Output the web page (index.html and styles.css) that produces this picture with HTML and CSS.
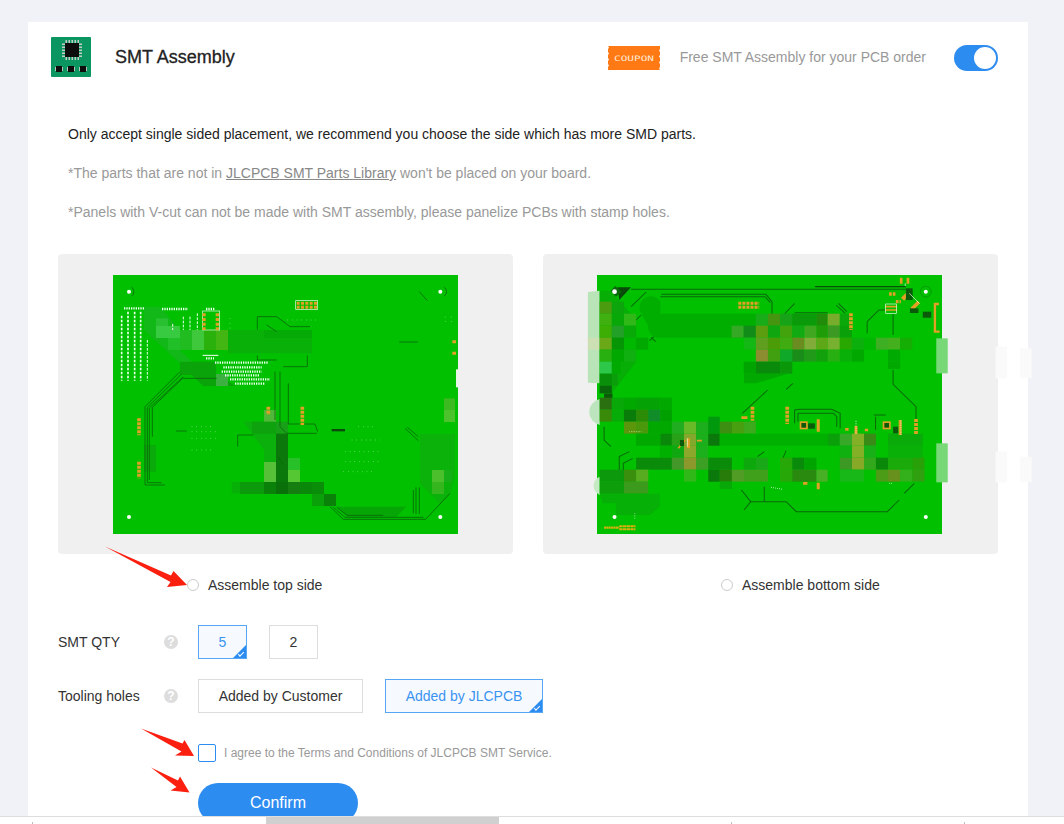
FILE: index.html
```html
<!DOCTYPE html>
<html>
<head>
    <title>SMT Assembly</title>
    <link rel="stylesheet" href="styles.css">
</head>
<body>
<div class="page">
    <div class="content">
        <div class="card">
            <div class="head">
                <svg class="logo" viewBox="0 0 40 40">
                    <rect width="40" height="40" rx="1" fill="#0b9560"/>
                    <g fill="none" stroke="#c4ccc6" stroke-width="3" stroke-dasharray="1.500 1.500">
                        <path d="M14.500 4.500H28"/>
                        <path d="M14.500 21.500H28"/>
                        <path d="M12.500 6.500V20"/>
                        <path d="M29.500 6.500V20"/>
                    </g>
                    <g fill="#b4c4ba">
                        <rect x="4" y="30" width="1" height="4"/>
                        <rect x="11" y="30" width="1" height="4"/>
                        <rect x="16" y="30" width="1" height="4"/>
                        <rect x="23" y="30" width="1" height="4"/>
                        <rect x="28" y="30" width="1" height="4"/>
                        <rect x="35" y="30" width="1" height="4"/>
                    </g>
                    <g fill="#0d0d0d">
                        <rect x="14" y="6" width="14" height="14"/>
                        <rect x="5" y="29" width="6" height="6"/>
                        <rect x="17" y="29" width="6" height="6"/>
                        <rect x="29" y="29" width="6" height="6"/>
                    </g>
                </svg>
                <h1 class="title">SMT Assembly</h1>
                <svg class="coupon" viewBox="0 0 52 24">
                    <path fill="#ff7a14" d="M0 0H52V3L51 4.500 52 6V9L51 10.500 52 12V15L51 16.500 52 18V21L51 22.500 52 24H0V21L1 19.500 0 18V15L1 13.500 0 12V9L1 7.500 0 6V3L1 1.500Z"/>
                    <text x="6" y="15" class="coupon-text" textLength="40" lengthAdjust="spacingAndGlyphs">COUPON</text>
                </svg>
                <span class="free">Free SMT Assembly for your PCB order</span>
                <span class="toggle"><span class="knob"></span></span>
            </div>

            <div class="notes">
                <p class="note-dark">Only accept single sided placement, we recommend you choose the side which has more SMD parts.</p>
                <p>*The parts that are not in <a href="#">JLCPCB SMT Parts Library</a> won't be placed on your board.</p>
                <p>*Panels with V-cut can not be made with SMT assembly, please panelize PCBs with stamp holes.</p>
            </div>

            <div class="boards">
                <div class="board-box">
                    <svg class="pcb" viewBox="189 75 1035 777" preserveAspectRatio="none">
                        <rect x="189" y="75" width="1035" height="777" fill="#00c000"/>
                        <!-- blurred parts -->
                        <g>
                            <path fill="#12b818" d="M282 170H330L390 240V300L430 340H390L282 240Z"/>
                            <rect x="318" y="205" width="36" height="24" fill="#28c030"/>
                            <rect x="318" y="228" width="72" height="36" fill="#38ca40"/>
                            <rect x="354" y="264" width="36" height="36" fill="#22c028"/>
                            <rect x="390" y="240" width="36" height="60" fill="#20bc20"/>
                            <rect x="426" y="240" width="36" height="60" fill="#3fc83c"/>
                            <rect x="462" y="240" width="36" height="60" fill="#2ab10c"/>
                            <rect x="498" y="240" width="36" height="60" fill="#44b614"/>
                            <rect x="534" y="240" width="252" height="70" fill="#08b008"/>
                            <rect x="642" y="240" width="144" height="24" fill="#06aa06"/>
                            <path fill="#0aa40a" d="M390 335H498V370L555 408H460L425 375H390Z"/>
                            <rect x="498" y="372" width="36" height="36" fill="#3cb040"/>
                            <path fill="#0cb00c" d="M580 515H680L714 550V696H642V600Z"/>
                            <rect x="642" y="480" width="36" height="36" fill="#50b838"/>
                            <rect x="606" y="515" width="72" height="36" fill="#0ea20e"/>
                            <rect x="678" y="515" width="36" height="36" fill="#18a018"/>
                            <rect x="678" y="551" width="36" height="145" fill="#0a780a"/>
                            <rect x="714" y="624" width="36" height="36" fill="#28c028"/>
                            <rect x="714" y="660" width="36" height="36" fill="#55c733"/>
                            <rect x="642" y="636" width="36" height="60" fill="#55c038"/>
                            <rect x="545" y="696" width="25" height="34" fill="#06b006"/>
                            <rect x="570" y="696" width="72" height="36" fill="#0c9a0c"/>
                            <rect x="642" y="696" width="36" height="36" fill="#0a820a"/>
                            <rect x="678" y="696" width="36" height="36" fill="#0a700a"/>
                            <rect x="714" y="696" width="36" height="36" fill="#167e10"/>
                            <rect x="750" y="696" width="36" height="36" fill="#0a880a"/>
                            <rect x="786" y="696" width="36" height="36" fill="#0a8e0a"/>
                            <rect x="786" y="732" width="36" height="36" fill="#0aa00a"/>
                            <rect x="822" y="732" width="36" height="36" fill="#0a820a"/>
                            <path fill="#06a606" d="M860 770H1068L1040 800H890Z"/>
                            <rect x="1182" y="445" width="33" height="35" fill="#3dba20"/>
                            <rect x="1182" y="480" width="33" height="36" fill="#4cc22c"/>
                            <path fill="#0ab20a" d="M1110 552H1215V680L1200 730L1170 762L1110 700Z"/>
                            <rect x="1146" y="660" width="36" height="36" fill="#4cc02c"/>
                            <rect x="1146" y="696" width="36" height="36" fill="#36b61e"/>
                            <rect x="1182" y="660" width="22" height="36" fill="#18b018"/>
                            <rect x="282" y="585" width="36" height="80" fill="#0aaa0a"/>
                            <rect x="1218" y="358" width="8" height="54" fill="#e8f5e8"/>
                        </g>
                        <!-- tracks -->
                        <g fill="none" stroke="#0a680a" stroke-width="2.500">
                            <path d="M390 365L285 470V705H345"/>
                            <path d="M395 372L292 472V698H335"/>
                            <path d="M400 380L298 474V690"/>
                            <path d="M500 385H398L307 472V560"/>
                            <path d="M622 240V200H680L720 230H780"/>
                            <path d="M650 225L680 245"/>
                            <path d="M622 316V330H680"/>
                            <path d="M675 365V510"/>
                            <path d="M690 365V530L710 550H800"/>
                            <path d="M715 400V522H795L803 545"/>
                            <path d="M700 350H772V316"/>
                            <path d="M1048 276H1104"/>
                            <path d="M1108 125L1132 152"/>
                            <path d="M563 590V555H610"/>
                            <path d="M378 543H410"/>
                            <path d="M840 770L880 808H1127L1200 730"/>
                            <path d="M850 772L885 802H1120"/>
                            <path d="M860 772L892 796H1000"/>
                            <path d="M1065 535L1105 572"/>
                            <path d="M1072 532L1105 560"/>
                            <path d="M1090 720V790"/>
                            <path d="M1098 712V792M1108 712V792"/>
                            <path d="M684 620L700 645"/>
                        </g>
                        <rect x="845" y="537" width="40" height="7" fill="#0a4a0a"/>
                        <!-- silkscreen -->
                        <g fill="none" stroke="#e8ffe8" stroke-width="5" stroke-dasharray="8 4">
                            <path d="M215 197V392"/>
                            <path d="M234 185V392"/>
                            <path d="M254 185V392"/>
                            <path d="M272 185V392"/>
                            <path d="M292 270V392" stroke-width="3"/>
                            <path d="M368 222V240M400 200V240M420 200V240M442 190V240" stroke-width="3"/>
                        </g>
                        <g fill="none" stroke="#e8ffe8" stroke-width="7" stroke-dasharray="4 3">
                            <path d="M222 175H285"/>
                            <path d="M336 177H414"/>
                            <path d="M468 177H496"/>
                            <path d="M468 325H492"/>
                            <path d="M495 338H655"/>
                            <path d="M520 352H635"/>
                            <path d="M515 365H635"/>
                            <path d="M525 376H630"/>
                            <path d="M540 388H660"/>
                            <path d="M555 401H645"/>
                        </g>
                        <g fill="none" stroke="#b8f0b8" stroke-width="2" stroke-dasharray="2 12">
                            <path d="M425 530H490"/>
                            <path d="M425 545H500"/>
                            <path d="M425 565H500"/>
                            <path d="M425 600H490"/>
                            <path d="M925 530H975"/>
                            <path d="M905 570H990"/>
                            <path d="M885 605H985"/>
                            <path d="M885 635H995"/>
                            <path d="M880 665H970"/>
                            <path d="M1186 200V225M1204 200V225"/>
                            <path d="M540 205V240M712 210H800"/>
                        </g>
                        <rect x="458" y="183" width="51" height="57" fill="none" stroke="#e8ffe8" stroke-width="2"/>
                        <rect x="737" y="152" width="66" height="26" fill="none" stroke="#e8ffe8" stroke-width="2"/>
                        <path d="M458 316H505" stroke="#fff" stroke-width="3"/>
                        <!-- pads -->
                        <g fill="none" stroke="#e2a024">
                            <path d="M462 190V240M502 190V240" stroke-width="10" stroke-dasharray="9 5"/>
                            <path d="M740 160H803M740 172H803" stroke-width="9" stroke-dasharray="9 4"/>
                            <path d="M267 505V556M267 635V685M757 470V525M655 470V495" stroke-width="11" stroke-dasharray="9 3"/>
                            <path d="M1207 275H1218M1207 310H1218" stroke-width="9"/>
                        </g>
                        <!-- holes -->
                        <g fill="#fff">
                            <circle cx="237" cy="125" r="6"/>
                            <circle cx="1171" cy="125" r="6"/>
                            <circle cx="237" cy="801" r="6"/>
                            <circle cx="1171" cy="801" r="6"/>
                        </g>
                        <path d="M245 112A16 16 0 0 1 245 138M1183 112A16 16 0 0 1 1183 138" fill="none" stroke="#0a680a" stroke-width="2.500"/>
                    </svg>
                </div>
                <div class="board-box">
                    <svg class="pcb pcb-back" viewBox="184 75 1023 777" preserveAspectRatio="none">
                        <rect x="184" y="75" width="1023" height="777" fill="#00c000"/>
                        <!-- tracks under the blur -->
                        <path d="M245 112H285L250 150Z" fill="#0a4a0a"/>
                        <path d="M222 125L238 108L258 125L238 142Z" fill="#0a680a"/>
                        <g fill="none" stroke="#0a680a" stroke-width="3">
                            <path d="M285 118H1100"/>
                            <path d="M830 110H1100" stroke-width="4" stroke="#0a500a"/>
                            <path d="M375 133H685L703 155V192"/>
                            <path d="M372 140H682L698 158"/>
                            <path d="M330 126L285 170M300 210L315 195"/>
                            <path d="M770 160L740 192M770 188H868"/>
                            <path d="M893 165L920 190M900 160L925 185"/>
                            <path d="M985 215L1020 180H1040M985 215V250"/>
                            <path d="M1062 190V255"/>
                            <path d="M1062 360V403L1130 470V530"/>
                            <path d="M640 755H745L775 785H1045L1080 750"/>
                            <path d="M690 420L615 490"/>
                            <path d="M640 755L612 720M640 755L620 780"/>
                            <path d="M680 710V755"/>
                            <path d="M205 530V570L225 590"/>
                            <path d="M250 670V620L280 605"/>
                            <path d="M262 660V640L290 625"/>
                            <path d="M765 400L745 418M660 620L680 605M735 625L745 602"/>
                            <path d="M1125 700L1095 730"/>
                            <path d="M770 520V480L785 478H880L905 490V535"/>
                            <path d="M780 515V490H885L895 500V530"/>
                            <path d="M1005 495H1040M1010 540V500"/>
                            <path d="M262 360L290 330M268 365L292 340"/>
                            <path d="M345 262L358 275M340 272L355 258"/>
                        </g>
                        <rect x="205" y="430" width="25" height="15" fill="#0a5a0a"/>
                        <!-- blur mosaic -->
                        <path fill="#b8e4b8" d="M157 126L192 122V400L157 398Z"/>
                        <rect x="157" y="263" width="35" height="36" fill="#cce0b4"/>
                        <path fill="#bde5bd" d="M192 447A40 40 0 0 0 192 525Z"/>
                        <path fill="#c4eac4" d="M192 680A30 30 0 0 0 192 735Z"/>
                        <rect x="1190" y="265" width="34" height="105" fill="#78d878"/>
                        <rect x="1190" y="580" width="34" height="117" fill="#78d878"/>
                        <rect x="1366" y="290" width="34" height="95" fill="#fafafa"/>
                        <rect x="1438" y="295" width="35" height="90" fill="#fafafa"/>
                        <rect x="1366" y="605" width="34" height="92" fill="#fafafa"/>
                        <rect x="1438" y="620" width="35" height="77" fill="#fafafa"/>
                        <path fill="#06ae06" d="M192 122H225L300 210V335L228 430H192Z"/>
                        <g>
                            <rect x="192" y="155" width="36" height="36" fill="#4c9c10"/>
                            <rect x="228" y="155" width="36" height="36" fill="#0ca50c"/>
                            <rect x="192" y="191" width="36" height="36" fill="#3fb010"/>
                            <rect x="228" y="191" width="36" height="36" fill="#08a808"/>
                            <rect x="264" y="191" width="36" height="36" fill="#30b818"/>
                            <rect x="192" y="227" width="36" height="36" fill="#3cae04"/>
                            <rect x="228" y="227" width="36" height="36" fill="#22a028"/>
                            <rect x="264" y="227" width="36" height="36" fill="#08aa08"/>
                            <rect x="192" y="263" width="36" height="36" fill="#6ba818"/>
                            <rect x="228" y="263" width="36" height="36" fill="#059505"/>
                            <rect x="264" y="263" width="36" height="36" fill="#00b800"/>
                            <rect x="300" y="263" width="36" height="36" fill="#00a800"/>
                            <rect x="192" y="299" width="36" height="36" fill="#28b010"/>
                            <rect x="228" y="299" width="36" height="36" fill="#00a800"/>
                            <rect x="264" y="299" width="36" height="36" fill="#10b010"/>
                            <rect x="192" y="335" width="36" height="36" fill="#2dc84a"/>
                            <rect x="228" y="335" width="26" height="36" fill="#00aa00"/>
                            <rect x="192" y="371" width="36" height="36" fill="#0a8f0a"/>
                            <rect x="228" y="371" width="18" height="36" fill="#0a9f0a"/>
                            <rect x="192" y="407" width="36" height="23" fill="#0a660a"/>
                        </g>
                        <path fill="#00ae00" d="M315 190A30 30 0 0 1 372 155V191H655V263H360Q335 255 335 225Z"/>
                        <g>
                            <rect x="655" y="191" width="36" height="36" fill="#18ac18"/>
                            <rect x="691" y="191" width="36" height="36" fill="#459510"/>
                            <rect x="727" y="191" width="36" height="36" fill="#18a218"/>
                            <rect x="763" y="191" width="72" height="36" fill="#0a9a0a"/>
                            <rect x="835" y="191" width="33" height="36" fill="#228c0a"/>
                            <rect x="868" y="191" width="36" height="36" fill="#78ac2c"/>
                            <rect x="904" y="191" width="36" height="36" fill="#0aa80a"/>
                            <rect x="583" y="227" width="36" height="36" fill="#35a825"/>
                            <rect x="619" y="227" width="36" height="36" fill="#128c18"/>
                            <rect x="655" y="227" width="36" height="36" fill="#5c9e10"/>
                            <rect x="691" y="227" width="36" height="36" fill="#10a610"/>
                            <rect x="727" y="227" width="36" height="36" fill="#42a30c"/>
                            <rect x="763" y="227" width="36" height="36" fill="#12aa12"/>
                            <rect x="799" y="227" width="36" height="36" fill="#40a820"/>
                            <rect x="835" y="227" width="33" height="36" fill="#209c08"/>
                            <rect x="868" y="227" width="36" height="36" fill="#3c9a24"/>
                            <rect x="904" y="227" width="36" height="36" fill="#0aa00a"/>
                            <rect x="619" y="263" width="36" height="36" fill="#14b814"/>
                            <rect x="655" y="263" width="36" height="36" fill="#609e20"/>
                            <rect x="691" y="263" width="36" height="36" fill="#4c9c08"/>
                            <rect x="727" y="263" width="36" height="36" fill="#40ac12"/>
                            <rect x="763" y="263" width="36" height="36" fill="#6b8c20"/>
                            <rect x="799" y="263" width="36" height="36" fill="#82ac3a"/>
                            <rect x="835" y="263" width="33" height="36" fill="#5ea818"/>
                            <rect x="868" y="263" width="36" height="36" fill="#78b030"/>
                            <rect x="904" y="263" width="36" height="36" fill="#28a800"/>
                            <rect x="940" y="263" width="36" height="36" fill="#0cb00c"/>
                            <rect x="976" y="263" width="35" height="36" fill="#00b800"/>
                            <rect x="1011" y="263" width="36" height="36" fill="#3eae22"/>
                            <rect x="1047" y="263" width="36" height="36" fill="#44b01e"/>
                            <rect x="1083" y="263" width="36" height="36" fill="#14ae04"/>
                            <rect x="655" y="299" width="36" height="36" fill="#8c8c30"/>
                            <rect x="691" y="299" width="36" height="36" fill="#40a010"/>
                            <rect x="727" y="299" width="36" height="36" fill="#10a828"/>
                            <rect x="763" y="299" width="36" height="36" fill="#1a8c1a"/>
                            <rect x="799" y="299" width="36" height="36" fill="#209a18"/>
                            <rect x="835" y="299" width="33" height="36" fill="#12a00c"/>
                            <rect x="868" y="299" width="36" height="36" fill="#28b012"/>
                            <rect x="904" y="299" width="36" height="36" fill="#08b008"/>
                            <rect x="940" y="299" width="36" height="36" fill="#00a800"/>
                            <rect x="1047" y="299" width="36" height="36" fill="#00aa00"/>
                            <rect x="619" y="335" width="36" height="36" fill="#00a400"/>
                            <rect x="655" y="335" width="72" height="36" fill="#0a8a0a"/>
                            <rect x="727" y="335" width="36" height="36" fill="#0a980a"/>
                            <rect x="1047" y="335" width="36" height="22" fill="#00a800"/>
                            <path fill="#00a800" d="M620 371H750L655 400H620Z"/>
                        </g>
                        <g>
                            <rect x="192" y="443" width="36" height="36" fill="#2a6f10"/>
                            <rect x="228" y="443" width="36" height="36" fill="#08a808"/>
                            <rect x="264" y="443" width="36" height="36" fill="#00a800"/>
                            <rect x="300" y="443" width="70" height="36" fill="#04a204"/>
                            <rect x="370" y="443" width="36" height="36" fill="#00a800"/>
                            <rect x="192" y="479" width="36" height="36" fill="#3a8a0a"/>
                            <rect x="228" y="479" width="36" height="36" fill="#08ac08"/>
                            <rect x="264" y="479" width="36" height="36" fill="#0a7c0a"/>
                            <rect x="300" y="479" width="36" height="36" fill="#2c8c08"/>
                            <rect x="336" y="479" width="36" height="36" fill="#108c28"/>
                            <rect x="372" y="479" width="34" height="36" fill="#00a000"/>
                            <rect x="264" y="515" width="36" height="36" fill="#5c960c"/>
                            <rect x="300" y="515" width="36" height="36" fill="#4c980c"/>
                            <rect x="336" y="515" width="70" height="36" fill="#00a800"/>
                            <rect x="406" y="515" width="36" height="36" fill="#20ae20"/>
                            <rect x="442" y="515" width="36" height="36" fill="#68ba28"/>
                            <rect x="478" y="515" width="36" height="36" fill="#1cae1c"/>
                            <rect x="514" y="500" width="34" height="51" fill="#00980c"/>
                            <rect x="548" y="515" width="36" height="36" fill="#3c8f10"/>
                            <rect x="584" y="515" width="36" height="36" fill="#48a010"/>
                            <rect x="620" y="515" width="35" height="36" fill="#3caa1c"/>
                            <rect x="300" y="551" width="72" height="36" fill="#00a800"/>
                            <rect x="372" y="551" width="34" height="36" fill="#0a880a"/>
                            <rect x="406" y="551" width="36" height="36" fill="#28a018"/>
                            <rect x="442" y="551" width="36" height="36" fill="#84a82c"/>
                            <rect x="478" y="551" width="36" height="36" fill="#1cae1c"/>
                            <rect x="514" y="551" width="34" height="36" fill="#0a780a"/>
                            <rect x="548" y="551" width="320" height="36" fill="#00b000"/>
                            <rect x="868" y="551" width="36" height="36" fill="#0aa00a"/>
                            <rect x="904" y="551" width="36" height="36" fill="#38a828"/>
                            <rect x="940" y="551" width="36" height="36" fill="#84b028"/>
                            <rect x="976" y="551" width="35" height="36" fill="#3a8a18"/>
                            <rect x="1047" y="551" width="103" height="36" fill="#0aaa0a"/>
                            <rect x="370" y="587" width="36" height="36" fill="#00b000"/>
                            <rect x="406" y="587" width="36" height="36" fill="#10a810"/>
                            <rect x="442" y="587" width="36" height="36" fill="#8ca82c"/>
                            <rect x="478" y="587" width="36" height="36" fill="#1cb01c"/>
                            <rect x="904" y="587" width="36" height="36" fill="#10b010"/>
                            <rect x="940" y="587" width="36" height="36" fill="#84b028"/>
                            <rect x="976" y="587" width="35" height="36" fill="#18b018"/>
                            <rect x="1047" y="587" width="103" height="36" fill="#08b008"/>
                            <rect x="300" y="623" width="106" height="36" fill="#0a8c0a"/>
                            <rect x="406" y="623" width="36" height="36" fill="#44982a"/>
                            <rect x="442" y="623" width="36" height="36" fill="#8c982c"/>
                            <rect x="478" y="623" width="36" height="36" fill="#3ca024"/>
                            <rect x="514" y="623" width="70" height="36" fill="#0a8c0a"/>
                            <rect x="619" y="623" width="36" height="36" fill="#0ca80c"/>
                            <rect x="655" y="623" width="36" height="36" fill="#18a818"/>
                            <rect x="727" y="623" width="36" height="36" fill="#28a808"/>
                            <rect x="763" y="623" width="36" height="36" fill="#0a8a0a"/>
                            <rect x="799" y="623" width="36" height="36" fill="#00a400"/>
                            <rect x="904" y="623" width="36" height="36" fill="#3c9a24"/>
                            <rect x="940" y="623" width="36" height="36" fill="#88a828"/>
                            <rect x="976" y="623" width="35" height="36" fill="#34a81c"/>
                            <rect x="1011" y="623" width="36" height="36" fill="#0a880a"/>
                            <rect x="1047" y="623" width="72" height="36" fill="#1aaa0a"/>
                            <rect x="1119" y="623" width="36" height="36" fill="#28a008"/>
                            <rect x="192" y="659" width="72" height="36" fill="#0c9a0c"/>
                            <rect x="264" y="659" width="36" height="36" fill="#3a900c"/>
                            <rect x="300" y="659" width="36" height="36" fill="#58ac20"/>
                            <rect x="442" y="659" width="36" height="36" fill="#30b818"/>
                            <rect x="514" y="659" width="34" height="36" fill="#0a780a"/>
                            <rect x="548" y="659" width="36" height="36" fill="#287c0a"/>
                            <rect x="584" y="659" width="36" height="36" fill="#509c24"/>
                            <rect x="620" y="659" width="71" height="36" fill="#40a01c"/>
                            <rect x="727" y="659" width="36" height="36" fill="#28a808"/>
                            <rect x="763" y="659" width="72" height="36" fill="#2a8a10"/>
                            <rect x="835" y="659" width="33" height="36" fill="#48b024"/>
                            <rect x="904" y="659" width="72" height="36" fill="#18b818"/>
                            <rect x="1011" y="659" width="36" height="36" fill="#4c9c18"/>
                            <rect x="1047" y="659" width="36" height="36" fill="#68901c"/>
                            <rect x="1083" y="659" width="36" height="36" fill="#34b01c"/>
                            <rect x="1119" y="659" width="36" height="36" fill="#30a010"/>
                            <rect x="192" y="695" width="72" height="36" fill="#0e9e0c"/>
                            <rect x="264" y="695" width="72" height="36" fill="#3c9a1c"/>
                            <rect x="548" y="695" width="36" height="22" fill="#08a808"/>
                            <path fill="#06b006" d="M192 731H370V770L340 795H240V760H200Z"/>
                        </g>
                        <!-- pads on top -->
                        <g fill="none" stroke="#e2a024">
                            <path d="M603 160H665M603 172H665" stroke-width="9" stroke-dasharray="9 3"/>
                            <path d="M937 190V240M645 470V512M748 470V522M1130 507V555" stroke-width="11" stroke-dasharray="9 3"/>
                            <path d="M1090 148L1112 126" stroke-width="13"/>
                            <path d="M1117 178L1138 156" stroke-width="11"/>
                            <path d="M1198 162H1186V245H1200" stroke-width="7"/>
                            <path d="M1082 92H1110" stroke-width="18" stroke-dasharray="8 12"/>
                            <path d="M1050 132H1070M1070 155H1085" stroke-width="10" stroke-dasharray="8 3"/>
                            <path d="M1038 170H1074M1038 180H1074" stroke-width="5"/>
                            <path d="M840 508V545M1083 510V555M952 528V552M840 698V718M455 565V595" stroke-width="9"/>
                            <path d="M795 700H808M612 503H630M920 538H930M978 540H988" stroke-width="8"/>
                            <path d="M480 572H495M425 595L445 570" stroke-width="5"/>
                        </g>
                        <g fill="#0a5a0a">
                            <rect x="785" y="514" width="24" height="24" fill="#e2a024"/>
                            <rect x="790" y="519" width="14" height="14"/>
                            <rect x="1031" y="514" width="24" height="24" fill="#e2a024"/>
                            <rect x="1036" y="519" width="14" height="14"/>
                            <rect x="1112" y="175" width="25" height="14"/>
                            <rect x="1150" y="185" width="25" height="18"/>
                            <rect x="1100" y="115" width="20" height="35"/>
                            <rect x="430" y="570" width="12" height="18"/>
                            <rect x="810" y="520" width="20" height="16"/>
                            <rect x="1062" y="530" width="15" height="20"/>
                        </g>
                        <g fill="none" stroke="#e8ffe8" stroke-width="2">
                            <rect x="1040" y="162" width="32" height="28"/>
                            <path d="M1110 130L1140 160"/>
                            <path d="M452 565V590M1098 100V108"/>
                            <path d="M952 512V552" stroke-dasharray="4 3"/>
                            <path d="M1085 510V555" stroke-dasharray="4 3"/>
                            <path d="M296 790V810M280 545H316" stroke-dasharray="2 3"/>
                            <path d="M700 712L735 718M1050 700H1062" stroke-dasharray="3 3"/>
                        </g>
                        <g fill="none" stroke="#d9b00c">
                            <path d="M205 833H250" stroke-width="7" stroke-dasharray="6 1"/>
                            <path d="M250 829H298M250 838H298" stroke-width="6" stroke-dasharray="10 1"/>
                        </g>
                        <g fill="#fff">
                            <circle cx="236" cy="125" r="7"/>
                            <circle cx="1159" cy="125" r="6"/>
                            <circle cx="236" cy="801" r="6"/>
                            <circle cx="1159" cy="801" r="6"/>
                        </g>
                        <circle cx="1159" cy="125" r="16" fill="none" stroke="#0a8a0a" stroke-width="2"/>
                    </svg>
                </div>
            </div>

            <div class="sides">
                <label class="side side-top"><span class="radio"></span>Assemble top side</label>
                <label class="side side-bottom"><span class="radio"></span>Assemble bottom side</label>
            </div>

            <div class="opt-row opt-qty">
                <span class="opt-label">SMT QTY</span>
                <span class="help">?</span>
                <span class="chip chip-qty chip-on">5</span>
                <span class="chip chip-qty">2</span>
            </div>
            <div class="opt-row opt-tool">
                <span class="opt-label">Tooling holes</span>
                <span class="help">?</span>
                <span class="chip chip-customer">Added by Customer</span>
                <span class="chip chip-jlc chip-on">Added by JLCPCB</span>
            </div>

            <div class="agree">
                <span class="check"></span>
                <span>I agree to the Terms and Conditions of JLCPCB SMT Service.</span>
            </div>
            <button class="confirm" type="button">Confirm</button>
        </div>
    </div>

    <div class="bottom-bar">
        <span class="tick tick-a"></span>
        <span class="thumb"></span>
        <span class="tick tick-b"></span>
        <span class="tick tick-c"></span>
    </div>

    <!-- red arrows drawn over the page -->
    <svg class="arrows" viewBox="0 0 1064 824">
        <g fill="#fb1f10">
            <path d="M105 546.500L171 575.500L173.500 571L187 585L167 587L170.500 582Z"/>
            <path d="M141 728.500L182.500 743.500L184.500 740L194 756L175 755.500L181.500 751.500Z"/>
            <path d="M151 767.500L178 780.500L180 776.500L189.500 792.500L170.500 790.500L176.500 787Z"/>
        </g>
    </svg>
</div>
</body>
</html>
```

FILE: styles.css
```css
html, body {
    margin: 0;
    height: 100%;
    overflow: hidden;
}
body {
    font-family: "Liberation Sans", Arial, sans-serif;
    font-size: 14px;
    color: #333;
    background-color: #f1f2f7;
}
.page {
    position: relative;
    display: flex;
    flex-direction: column;
    height: 824px;
}
.content {
    flex: 1;
    min-height: 0;
    overflow: hidden;
    padding: 22px 36px 0 28px;
}
.card {
    background: #fff;
    padding: 15px 30px 30px;
}

/* head */
.head {
    display: flex;
    align-items: center;
    height: 40px;
    margin-left: -7px;
}
.logo {
    width: 40px;
    height: 40px;
}
.title {
    flex: 1;
    margin: 0 0 0 24px;
    font-size: 18px;
    font-weight: normal;
    color: #222;
    -webkit-text-stroke: 0.3px #222;
}
.coupon {
    width: 52px;
    height: 24px;
    margin-top: 2px;
}
.coupon-text {
    font-family: "DejaVu Sans Mono", monospace;
    font-size: 7.5px;
    fill: #ffe9d6;
}
.free {
    margin-left: 20px;
    color: #999;
}
.toggle {
    display: flex;
    justify-content: flex-end;
    align-items: center;
    width: 44px;
    height: 26px;
    margin-left: 28px;
    margin-top: 2px;
    padding-right: 2px;
    box-sizing: border-box;
    border-radius: 13px;
    background-color: #2d8cf0;
}
.knob {
    width: 22px;
    height: 22px;
    border-radius: 50%;
    background: #fff;
}

/* notes */
.notes {
    margin-top: 47px;
    padding-left: 10px;
    color: #999;
}
.notes p {
    margin: 0 0 19px;
    line-height: 20px;
}
.notes .note-dark {
    color: #222;
}
.notes a {
    color: #888;
}

/* board pictures */
.boards {
    display: grid;
    grid-template-columns: 455px 455px;
    column-gap: 30px;
    margin-top: 32px;
}
.board-box {
    display: flex;
    justify-content: center;
    align-items: flex-start;
    height: 300px;
    padding-top: 21px;
    box-sizing: border-box;
    border-radius: 4px;
    background-color: #f0f0f0;
}
.pcb {
    display: block;
    width: 345px;
    height: 259px;
    overflow: visible;
}
.pcb-back {
    margin-left: -2px;
}

/* sides */
.sides {
    display: grid;
    grid-template-columns: 455px 455px;
    column-gap: 30px;
    margin-top: 21px;
}
.side {
    display: flex;
    align-items: center;
    height: 20px;
}
.side-top {
    padding-left: 129px;
}
.side-bottom {
    padding-left: 178px;
}
.radio {
    width: 12px;
    height: 12px;
    margin-right: 9px;
    border: 1px solid #ccc;
    border-radius: 50%;
    box-sizing: border-box;
}

/* options */
.opt-row {
    display: flex;
    align-items: center;
    height: 34px;
}
.opt-qty {
    margin-top: 30px;
}
.opt-tool {
    margin-top: 20px;
}
.opt-label {
    width: 106px;
}
.help {
    width: 14px;
    height: 14px;
    margin-right: 20px;
    border-radius: 50%;
    background-color: #ddd;
    color: #fff;
    font-size: 12px;
    font-weight: bold;
    line-height: 14px;
    text-align: center;
}
.chip {
    position: relative;
    display: flex;
    justify-content: center;
    align-items: center;
    height: 34px;
    box-sizing: border-box;
    margin-right: 22px;
    border: 1px solid #ddd;
}
.chip-qty {
    width: 49px;
}
.chip-customer {
    width: 165px;
}
.chip-jlc {
    width: 158px;
}
.chip-on {
    border-color: #56a6f5;
    background-color: #f6faff;
    color: #3b93f0;
}
.chip-on::before {
    content: "";
    position: absolute;
    right: 0;
    bottom: 0;
    border-style: solid;
    border-width: 0 0 13px 13px;
    border-color: transparent transparent #2d8cf0 transparent;
}
.chip-on::after {
    content: "";
    position: absolute;
    right: 2px;
    bottom: 3px;
    width: 5px;
    height: 2px;
    border-left: 1px solid #fff;
    border-bottom: 1px solid #fff;
    transform: rotate(-45deg);
}

/* agree + confirm */
.agree {
    display: flex;
    align-items: center;
    margin-top: 31px;
    margin-left: 140px;
    font-size: 12px;
    color: #999;
}
.check {
    width: 18px;
    height: 18px;
    margin-right: 8px;
    box-sizing: border-box;
    border: 1px solid #2d8cf0;
    border-radius: 2px;
}
.confirm {
    display: block;
    width: 160px;
    height: 40px;
    margin: 21px 0 0 140px;
    border: none;
    border-radius: 20px;
    background-color: #2d8cf0;
    color: #fff;
    font-family: inherit;
    font-size: 16px;
}

/* window scrollbar along the bottom */
.bottom-bar {
    display: flex;
    align-items: flex-end;
    height: 8px;
    box-sizing: border-box;
    border-top: 1px solid #ddd;
    background: #fff;
}
.thumb {
    width: 233px;
    height: 7px;
    margin-left: 233px;
    background-color: #d0d0d0;
}
.tick {
    width: 1px;
    height: 2px;
    background-color: #bbb;
}
.tick-a {
    margin-left: 32px;
}
.tick-b {
    margin-left: 232px;
}
.tick-c {
    margin-left: 232px;
}

.arrows {
    position: absolute;
    left: 0;
    top: 0;
    width: 1064px;
    height: 824px;
    pointer-events: none;
}
```
